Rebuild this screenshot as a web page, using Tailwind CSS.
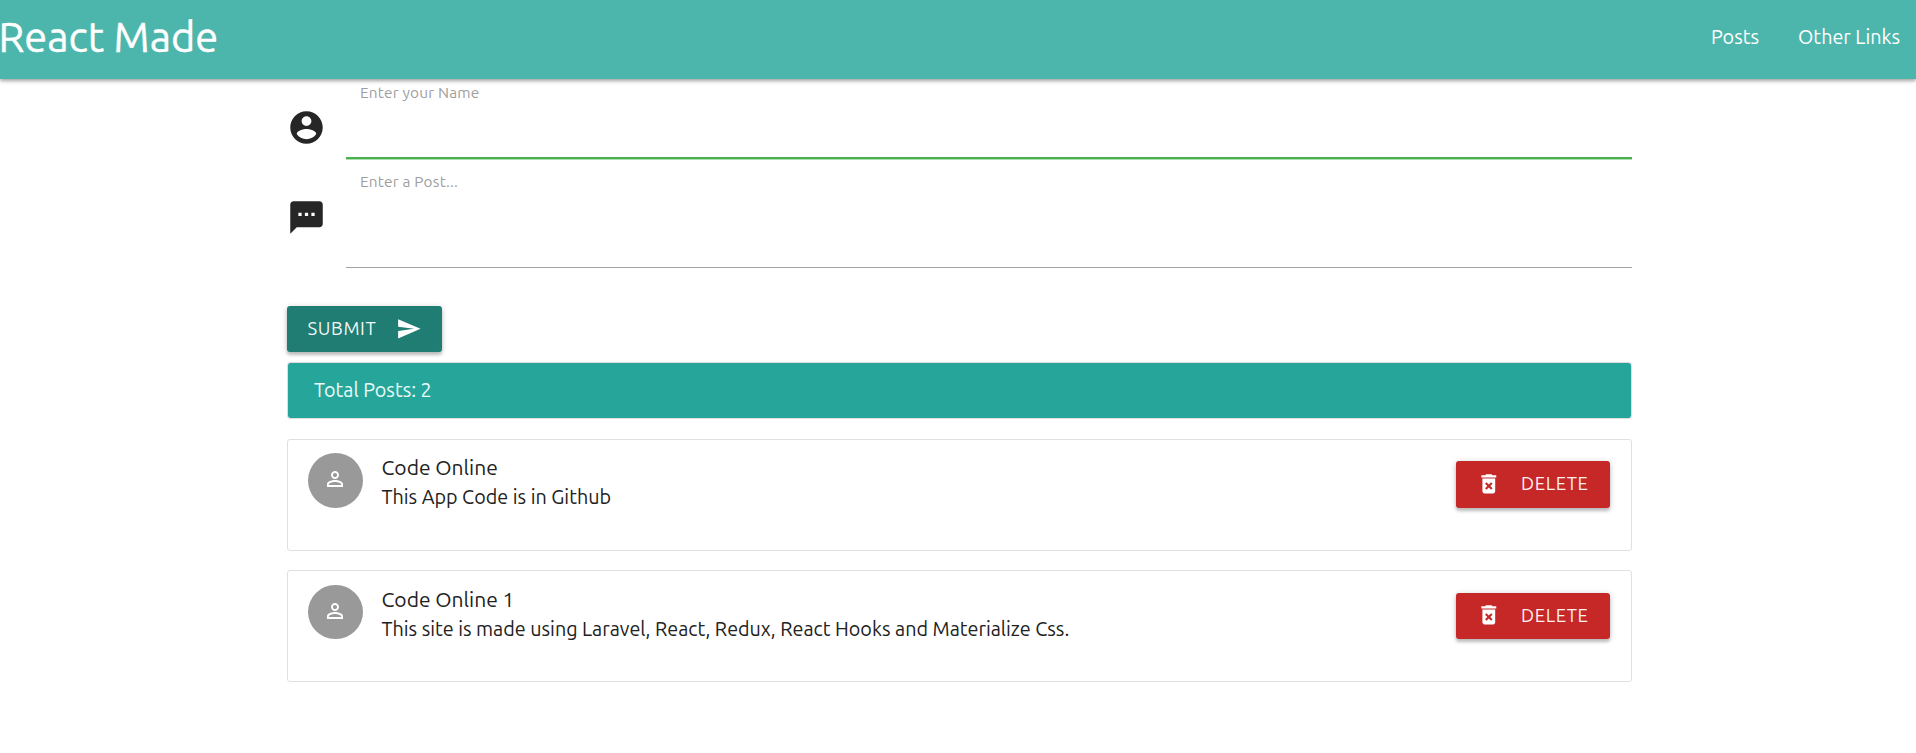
<!DOCTYPE html>
<html lang="en">
<head>
<meta charset="utf-8">
<title>React Made</title>
<script src="https://cdn.jsdelivr.net/npm/@tailwindcss/browser@4"></script>
</head>
<body class="bg-white font-['Ubuntu','Noto_Sans',sans-serif] text-[#212121]">
<nav class="relative flex h-[79px] items-start justify-between bg-[#4db6ac] text-white shadow-[0_2px_3px_rgba(0,0,0,0.24),0_1px_6px_rgba(0,0,0,0.2)]">
  <a class="-ml-[1.5px] text-[41.5px] leading-[74px] [-webkit-text-stroke:0.4px_white]">React Made</a>
  <ul class="flex gap-[39px] pr-4 text-[19.75px] leading-[75px]">
    <li>Posts</li>
    <li>Other Links</li>
  </ul>
</nav>

<main class="ml-[287px] w-[1345px]">
  <form>
    <div class="flex h-[81px]">
      <svg class="mt-[29px] size-[39px] shrink-0" viewBox="0 0 24 24" fill="#262626"><path d="M12 2C6.48 2 2 6.48 2 12s4.48 10 10 10 10-4.48 10-10S17.52 2 12 2zm0 3c1.66 0 3 1.34 3 3s-1.34 3-3 3-3-1.34-3-3 1.34-3 3-3zm0 14.2c-2.5 0-4.71-1.28-6-3.22.03-1.99 4-3.08 6-3.08 1.99 0 5.97 1.09 6 3.08-1.29 1.94-3.5 3.22-6 3.22z"/></svg>
      <div class="ml-5 flex grow flex-col justify-between pt-1">
        <label class="pl-[14px] text-[15.4px] leading-[20px] tracking-[0.2px] text-[#9e9e9e]">Enter your Name</label>
        <div class="h-[3px] border-b border-[#b0deb2] bg-[#4caf50]"></div>
      </div>
    </div>
    <div class="flex h-[108px]">
      <svg class="mt-[38px] size-[39px] shrink-0" viewBox="0 0 24 24" fill="#262626"><path d="M20 2H4c-1.1 0-1.99.9-1.99 2L2 22l4-4h14c1.1 0 2-.9 2-2V4c0-1.100-.9-2-2-2zM9 11H7V9h2v2zm4 0h-2V9h2v2zm4 0h-2V9h2v2z"/></svg>
      <div class="ml-5 flex grow flex-col justify-between pt-3">
        <label class="pl-[14px] text-[15.4px] leading-[20px] tracking-[0.2px] text-[#9e9e9e]">Enter a Post...</label>
        <div class="h-px bg-[#a2a2a2]"></div>
      </div>
    </div>
    <button type="button" class="mt-[38px] flex h-[46px] w-[155px] items-center rounded-[3px] bg-[#1f7d73] pl-[20.5px] text-[18.5px] leading-[45px] text-white/95 shadow-[0_3px_3px_rgba(0,0,0,0.18),0_1px_6px_rgba(0,0,0,0.18)]">
      <span class="-mt-px w-[88.5px] text-left tracking-[0.6px]">SUBMIT</span>
      <svg class="-mt-px size-[25.6px]" viewBox="0 0 24 24" fill="white"><path d="M2.010 21L23 12 2.010 3 2 10l15 2-15 2z"/></svg>
    </button>
  </form>

  <div class="mt-[10px] h-[57px] rounded-[3px] border border-[#dedede] bg-[#26a69a] bg-clip-padding pl-[26px] text-[19.75px] leading-[55px] text-[#eafaf9]">Total Posts: 2</div>

  <section class="mt-5 flex h-[112px] rounded-[3px] border border-[#e0e0e0] pl-[19.5px]">
    <div class="mt-[13px] flex size-[55px] items-center justify-center rounded-full bg-[#999]">
      <svg class="-mt-[3px] size-6" viewBox="0 0 24 24" fill="white"><path d="M12 5.900c1.160 0 2.100.94 2.100 2.100s-.94 2.100-2.100 2.100S9.900 9.160 9.900 8s.94-2.100 2.100-2.100m0 9c2.970 0 6.100 1.460 6.100 2.100v1.100H5.900V17c0-.64 3.130-2.100 6.100-2.100M12 4C9.790 4 8 5.790 8 8s1.790 4 4 4 4-1.790 4-4-1.790-4-4-4zm0 9c-2.670 0-8 1.340-8 4v3h16v-3c0-2.660-5.330-4-8-4z"/></svg>
    </div>
    <div class="ml-[19px] mt-[13px]">
      <p class="text-[21px] leading-[29px]">Code Online</p>
      <p class="text-[19.75px] leading-[31px]">This App Code is in Github</p>
    </div>
    <button type="button" class="ml-auto mr-[21px] mt-[21px] flex h-[47px] w-[154px] items-center rounded-[3px] bg-[#c62828] pl-[20px] text-[18.5px] leading-[44px] text-white/95 shadow-[0_3px_3px_rgba(0,0,0,0.18),0_1px_6px_rgba(0,0,0,0.18)]">
      <svg class="-mt-[2px] size-[25.6px]" viewBox="0 0 24 24" fill="white"><path d="M6 19c0 1.100.9 2 2 2h8c1.100 0 2-.9 2-2V7H6v12zm2.460-7.120l1.410-1.410L12 12.590l2.120-2.120 1.410 1.410L13.410 14l2.120 2.120-1.410 1.410L12 15.410l-2.120 2.120-1.410-1.410L10.590 14l-2.130-2.120zM15.500 4l-1-1h-5l-1 1H5v2h14V4z"/></svg>
      <span class="-mt-[3px] ml-[19.5px] tracking-[0.6px]">DELETE</span>
    </button>
  </section>

  <section class="mt-[19px] flex h-[112px] rounded-[3px] border border-[#e0e0e0] pl-[19.5px]">
    <div class="mt-[14px] flex h-[54px] w-[55px] items-center justify-center rounded-full bg-[#999]">
      <svg class="-mt-[2px] size-6" viewBox="0 0 24 24" fill="white"><path d="M12 5.900c1.160 0 2.100.94 2.100 2.100s-.94 2.100-2.100 2.100S9.900 9.160 9.900 8s.94-2.100 2.100-2.100m0 9c2.970 0 6.100 1.460 6.100 2.100v1.100H5.900V17c0-.64 3.130-2.100 6.100-2.100M12 4C9.790 4 8 5.790 8 8s1.790 4 4 4 4-1.790 4-4-1.790-4-4-4zm0 9c-2.670 0-8 1.340-8 4v3h16v-3c0-2.660-5.330-4-8-4z"/></svg>
    </div>
    <div class="ml-[19px] mt-[14px]">
      <p class="text-[21px] leading-[29px]">Code Online 1</p>
      <p class="text-[19.75px] leading-[31px]">This site is made using Laravel, React, Redux, React Hooks and Materialize Css.</p>
    </div>
    <button type="button" class="ml-auto mr-[21px] mt-[22px] flex h-[46px] w-[154px] items-center rounded-[3px] bg-[#c62828] pl-[20px] text-[18.5px] leading-[44px] text-white/95 shadow-[0_3px_3px_rgba(0,0,0,0.18),0_1px_6px_rgba(0,0,0,0.18)]">
      <svg class="-mt-[2px] size-[25.6px]" viewBox="0 0 24 24" fill="white"><path d="M6 19c0 1.100.9 2 2 2h8c1.100 0 2-.9 2-2V7H6v12zm2.460-7.120l1.410-1.410L12 12.590l2.120-2.120 1.410 1.410L13.410 14l2.120 2.120-1.410 1.410L12 15.410l-2.120 2.120-1.410-1.410L10.590 14l-2.130-2.120zM15.500 4l-1-1h-5l-1 1H5v2h14V4z"/></svg>
      <span class="-mt-[2px] ml-[19.5px] tracking-[0.6px]">DELETE</span>
    </button>
  </section>
</main>
</body>
</html>
